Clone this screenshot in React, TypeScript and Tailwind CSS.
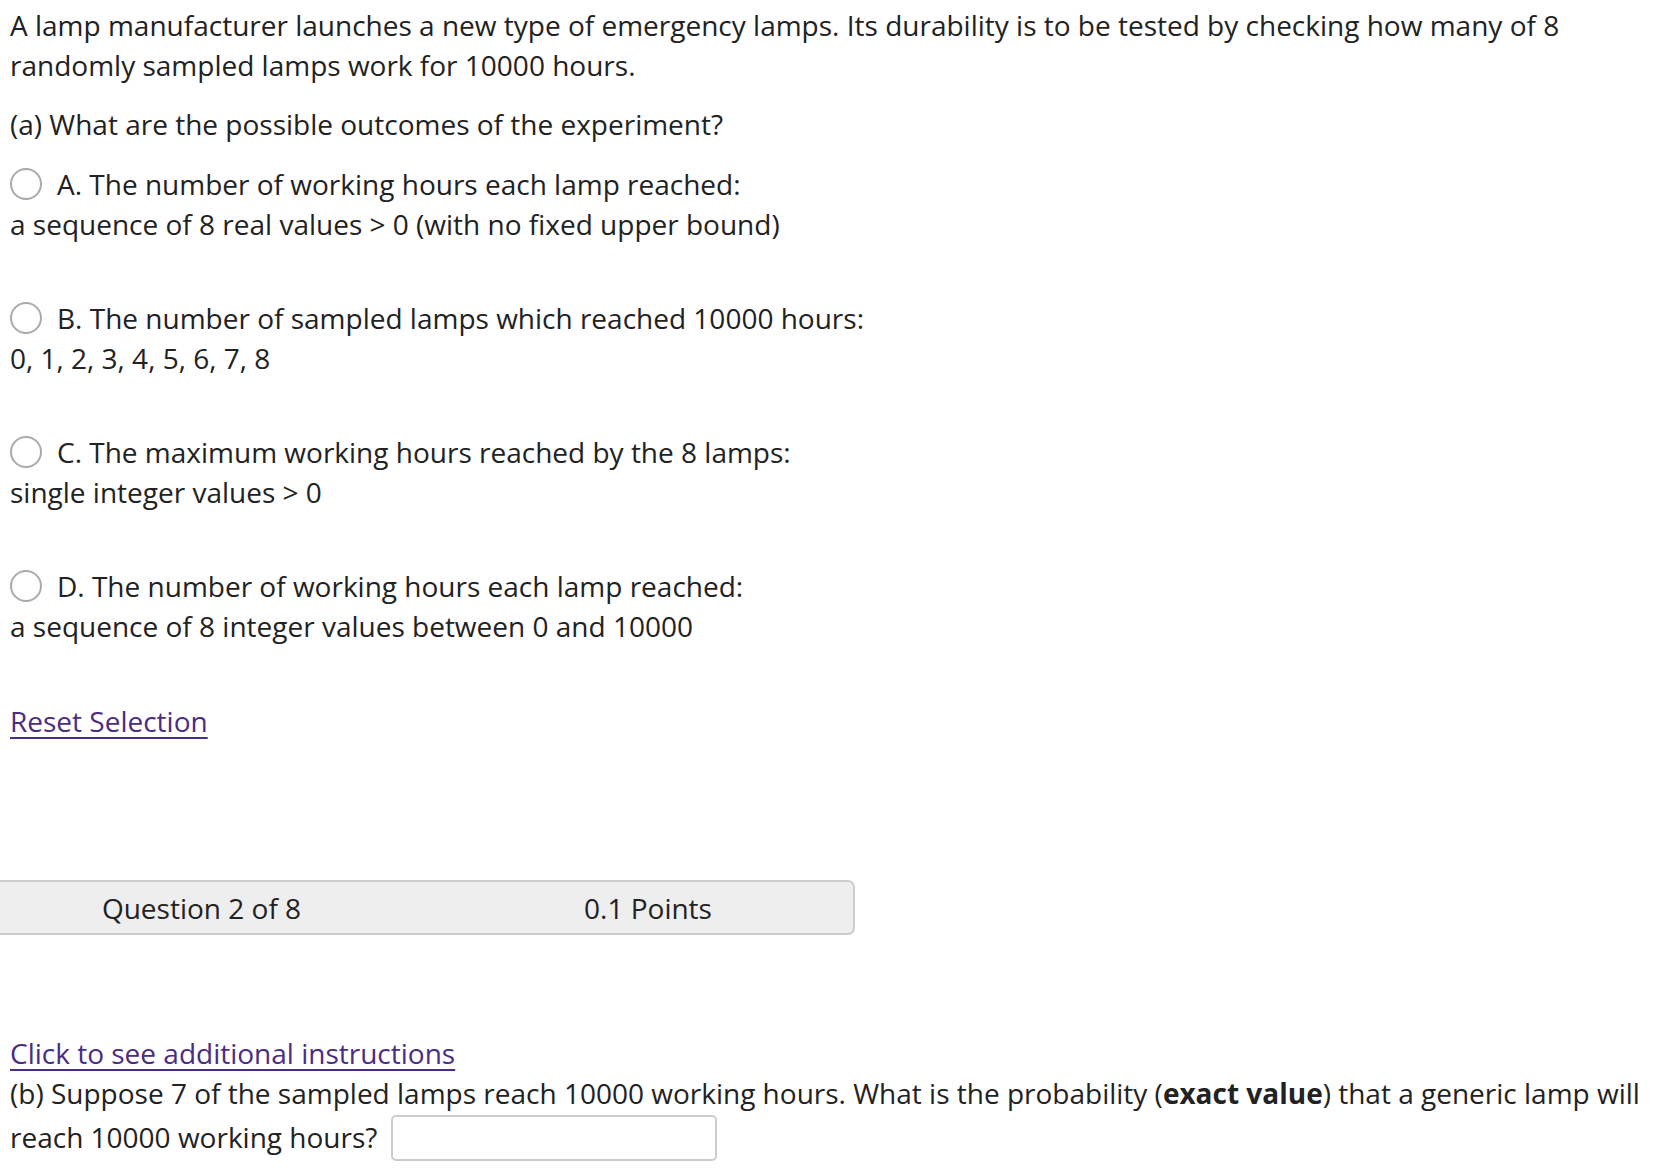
import React, { useState } from 'react'

const options = [
  { id: 'A', title: 'A. The number of working hours each lamp reached:', detail: 'a sequence of 8 real values > 0 (with no fixed upper bound)' },
  { id: 'B', title: 'B. The number of sampled lamps which reached 10000 hours:', detail: '0, 1, 2, 3, 4, 5, 6, 7, 8' },
  { id: 'C', title: 'C. The maximum working hours reached by the 8 lamps:', detail: 'single integer values > 0' },
  { id: 'D', title: 'D. The number of working hours each lamp reached:', detail: 'a sequence of 8 integer values between 0 and 10000' },
]

export default function App() {
  const [selected, setSelected] = useState<string | null>(null)
  const [answer, setAnswer] = useState('')

  return (
    <div className="min-h-[1170px] bg-white text-[28px] leading-[40px] text-[#222]" style={{ fontFamily: '"Open Sans", "Noto Sans", sans-serif' }}>
      <div className="pl-[10px] pr-[4px] pt-[5px]">
        <p>
          A lamp manufacturer launches a new type of emergency lamps. Its durability is to be tested by checking how many of 8 randomly sampled lamps work for 10000 hours.
        </p>
        <p className="mt-[19px]">(a) What are the possible outcomes of the experiment?</p>

        {/* Choices */}
        <div className="mt-[20px] flex flex-col gap-[54px]">
          {options.map((opt) => (
            <label key={opt.id} className="block cursor-pointer">
              <div className="flex items-center">
                <span className="flex h-[40px] w-[47px] shrink-0 items-center">
                  <input
                    type="radio"
                    name="outcome"
                    checked={selected === opt.id}
                    onChange={() => setSelected(opt.id)}
                    className="h-[32px] w-[32px] cursor-pointer appearance-none rounded-full border-2 border-[#aaa] bg-white checked:border-[10px] checked:border-[#4b2c84]"
                  />
                </span>
                <span>{opt.title}</span>
              </div>
              <div>{opt.detail}</div>
            </label>
          ))}
        </div>

        <div className="mt-[55px]">
          <a href="#" onClick={(e) => { e.preventDefault(); setSelected(null) }} className="text-[#4b2c84] underline underline-offset-[5px] decoration-2">
            Reset Selection
          </a>
        </div>
      </div>

      {/* Question bar */}
      <div className="mt-[139px] flex h-[55px] w-[855px] items-center rounded-r-[7px] border-2 border-l-0 border-[#ccc] bg-[#eee]">
        <div className="w-[403px] shrink-0 text-center">Question 2 of 8</div>
        <div className="w-[450px] shrink-0 pl-[40px] text-center">0.1 Points</div>
      </div>

      <div className="pl-[10px]">
        <div className="mt-[98px]">
          <a href="#" onClick={(e) => e.preventDefault()} className="text-[#4b2c84] underline underline-offset-[5px] decoration-2">
            Click to see additional instructions
          </a>
        </div>
        <p className="-mt-[2px] leading-[44px]">
          (b) Suppose 7 of the sampled lamps reach 10000 working hours. What is the probability (<b className="font-bold">exact value</b>) that a generic lamp will reach 10000 working hours?{' '}
          <input
            type="text"
            value={answer}
            onChange={(e) => setAnswer(e.target.value)}
            className="mb-[5px] ml-[6px] h-[46px] w-[326px] rounded-[5px] border-2 border-[#ccc] bg-white px-2 align-middle outline-none"
          />
        </p>
      </div>
    </div>
  )
}
